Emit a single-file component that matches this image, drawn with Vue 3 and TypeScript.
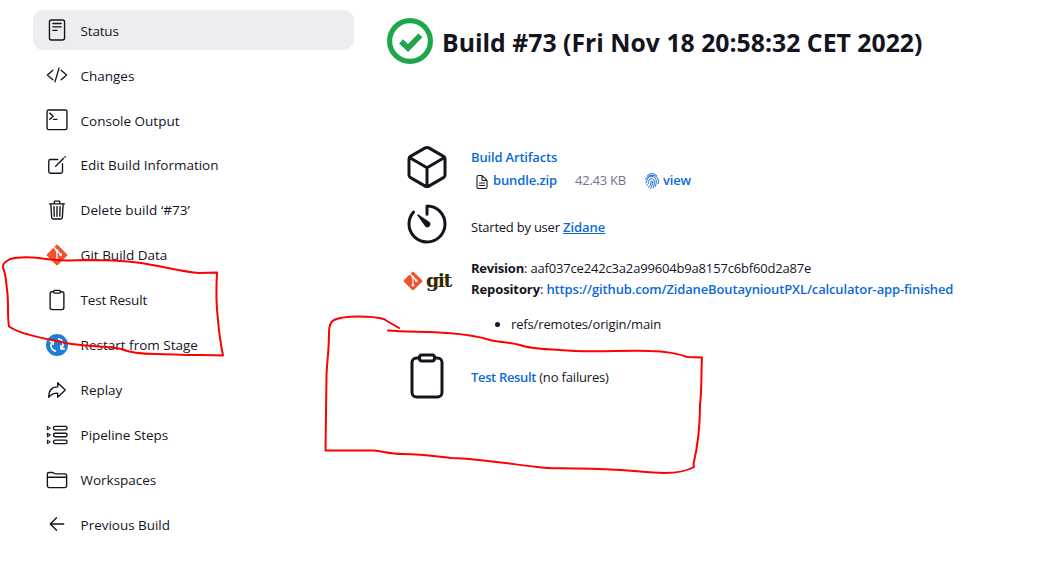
<script setup lang="ts">
interface Task {
  icon: string
  label: string
  track: string
}

const tasks: Task[] = [
  { icon: 'status', label: 'Status', track: 't3' },
  { icon: 'code', label: 'Changes', track: 't1' },
  { icon: 'console', label: 'Console Output', track: 't0' },
  { icon: 'edit', label: 'Edit Build Information', track: 't0' },
  { icon: 'trash', label: 'Delete build ‘#73’', track: 'tw' },
  { icon: 'git', label: 'Git Build Data', track: 't0' },
  { icon: 'clipboard', label: 'Test Result', track: 't3' },
  { icon: 'restart', label: 'Restart from Stage', track: 't0' },
  { icon: 'redo', label: 'Replay', track: 't1' },
  { icon: 'steps', label: 'Pipeline Steps', track: 't1' },
  { icon: 'folder', label: 'Workspaces', track: 't1' },
  { icon: 'back', label: 'Previous Build', track: 't1' },
]
</script>

<template>
  <div class="page">
    <nav class="side">
      <a v-for="(task, i) in tasks" :key="task.label" class="task" :class="{ active: i === 0 }">
        <svg class="ico" viewBox="0 0 512 512">
          <g v-if="task.icon === 'status'">
            <rect x="80" y="24" width="352" height="464" rx="48" />
            <path d="M160 104h192M160 184h192M160 264h96" />
          </g>
          <path v-else-if="task.icon === 'code'" d="M160 368L32 256l128-112M352 368l128-112-128-112M304 96l-96 320" />
          <g v-else-if="task.icon === 'console'">
            <rect x="24" y="24" width="464" height="456" rx="40" />
            <path d="M88 96l80 72-80 72M176 240h80" />
          </g>
          <g v-else-if="task.icon === 'edit'">
            <path d="M384 224v184a40 40 0 01-40 40H104a40 40 0 01-40-40V168a40 40 0 0140-40h167.48" />
            <path class="solid" d="M459.94 53.25a16.06 16.06 0 00-23.22-.56L424.35 65a8 8 0 000 11.31l11.34 11.32a8 8 0 0011.34 0l12.06-12c6.1-6.09 6.67-16.01.85-22.38zM399.34 90L218.82 270.2a9 9 0 00-2.31 3.93L208.16 299a3.91 3.91 0 004.86 4.86l24.85-8.35a9 9 0 003.93-2.31L422 112.66a9 9 0 000-12.66l-9.95-10a9 9 0 00-12.71 0z" />
          </g>
          <path v-else-if="task.icon === 'trash'" d="M112 112l20 320c.95 18.49 14.4 32 32 32h184c17.67 0 30.87-13.51 32-32l20-320M80 112h352M192 112V72a23.93 23.93 0 0124-24h80a23.93 23.93 0 0124 24v40M256 176v224M184 176l8 224M328 176l-8 224" />
          <g v-else-if="task.icon === 'git'">
            <rect class="git-bg" x="78" y="78" width="356" height="356" rx="26" transform="rotate(45 256 256)" />
            <path class="git-line" d="M176 72l78 78v214M254 150l88 92" />
            <g class="git-dot">
              <circle cx="254" cy="158" r="34" /><circle cx="254" cy="364" r="34" /><circle cx="342" cy="250" r="34" />
            </g>
          </g>
          <g v-else-if="task.icon === 'clipboard'">
            <path d="M336 64h32a48 48 0 0148 48v320a48 48 0 01-48 48H144a48 48 0 01-48-48V112a48 48 0 0148-48h32" />
            <rect x="176" y="32" width="160" height="64" rx="26" />
          </g>
          <g v-else-if="task.icon === 'restart'">
            <circle class="blue" cx="256" cy="256" r="256" />
            <path class="white-line" d="M236 400C116 384 82 262 150 172M276 112c120 16 154 138 86 228" />
            <path class="white-line" d="M76 166h92v92M436 346h-92v-92" />
          </g>
          <path v-else-if="task.icon === 'redo'" d="M448 256L272 88v96C103.57 184 64 304.77 64 424c48.61-62.24 91.6-96 208-96v96z" />
          <g v-else-if="task.icon === 'steps'">
            <rect x="176" y="56" width="312" height="80" rx="34" />
            <rect x="176" y="216" width="312" height="80" rx="34" />
            <rect x="176" y="376" width="312" height="80" rx="34" />
            <path class="thin" d="M32 56v80l68-40zM32 216v80l68-40zM32 376v80l68-40z" />
          </g>
          <path v-else-if="task.icon === 'folder'" d="M440 432H72a40 40 0 01-40-40V120a40 40 0 0140-40h75.89a40 40 0 0122.19 6.72l27.84 18.56a40 40 0 0022.19 6.72H440a40 40 0 0140 40v240a40 40 0 01-40 40zM32 192h448" />
          <path v-else d="M244 400L100 256l144-144M120 256h292" />
        </svg>
        <span :class="task.track">{{ task.label }}</span>
      </a>
    </nav>

    <main class="main">
      <header class="head">
        <svg class="ok" viewBox="0 0 46 46">
          <circle cx="23" cy="23" r="20.4" />
          <path d="M14 23.4l7 6.6 12.4-12.6" />
        </svg>
        <h1>Build #73 (Fri Nov 18 20:58:32 CET 2022)</h1>
      </header>

      <section class="row artifacts">
        <svg class="big" viewBox="0 0 512 512">
          <path d="M448 341.37V170.61A32 32 0 00432.11 143l-152-88.46a47.94 47.94 0 00-48.24 0L79.89 143A32 32 0 0064 170.61v170.76A32 32 0 0079.89 369l152 88.46a48 48 0 0048.24 0l152-88.46A32 32 0 00448 341.37zM69 153.99l187 110 187-110M256 463.99v-200" />
        </svg>
        <div class="body">
          <div><a>Build Artifacts</a></div>
          <div class="file">
            <svg class="doc" viewBox="0 0 512 512">
              <path d="M416 221.25V416a48 48 0 01-48 48H144a48 48 0 01-48-48V96a48 48 0 0148-48h98.75a32 32 0 0122.62 9.37l141.26 141.26a32 32 0 019.37 22.62zM256 56v120a32 32 0 0032 32h120M176 288h160M176 368h160" />
            </svg>
            <a class="s-zip">bundle.zip</a>
            <span class="size">42.43 KB</span>
            <svg class="finger" viewBox="0 0 14 16">
              <path d="M2.5 2.6C5-.1 9.300-.1 11.600 2.600M.7 6.200C2.200.9 11.800.9 13.200 6.400c.4 1.600.2 3 0 4.200M.8 10C2.500 8.500 1.400 7 2.800 5.200 5 2.200 10.700 3 11.200 7.400c.2 2.200-.1 4-.7 6M1.700 12.400c2.700-2 1.700-3.800 2.500-5.400 1.200-2.200 4.700-1.700 5 1 .2 2.700-.3 4.900-1 7M3.400 14.400c2.800-2.400 2.400-4.400 2.800-5.900.3-.9 1.100-.8 1.200.2.1 2.900-.6 5-1.700 6.700" />
            </svg>
            <a>view</a>
          </div>
        </div>
      </section>

      <section class="row started">
        <svg class="big" viewBox="0 0 512 512">
          <path d="M112.91 128A191.85 191.85 0 0064 254c-1.18 106.35 85.65 193.8 192 194 106.2.2 192-85.83 192-192 0-104.54-83.55-189.61-187.5-192a4.36 4.36 0 00-4.5 4.37V152" />
          <path class="solid" d="M233.38 278.63l-79-113a8.13 8.13 0 0111.32-11.32l113 79a32.5 32.5 0 01-37.25 53.26 33.21 33.21 0 01-8.07-7.94z" />
        </svg>
        <div class="body"><span class="s-start">Started by user</span> <a class="user">Zidane</a></div>
      </section>

      <section class="row git">
        <div class="git-logo">
          <svg viewBox="0 0 512 512">
            <rect class="git-bg" x="78" y="78" width="356" height="356" rx="26" transform="rotate(45 256 256)" />
            <path class="git-line" d="M176 72l78 78v214M254 150l88 92" />
            <g class="git-dot">
              <circle cx="254" cy="158" r="34" /><circle cx="254" cy="364" r="34" /><circle cx="342" cy="250" r="34" />
            </g>
          </svg>
          <span>git</span>
        </div>
        <div class="body">
          <div><b class="s-rev">Revision</b>: <span>aaf037ce242c3a2a99604b9a8157c6bf60d2a87e</span></div>
          <div><b class="s-repo">Repository</b>: <a class="s-url">https://github.com/ZidaneBoutaynioutPXL/calculator-app-finished</a></div>
          <ul><li>refs/remotes/origin/main</li></ul>
        </div>
      </section>

      <section class="row result">
        <svg class="big" viewBox="0 0 512 512">
          <path d="M336 64h32a48 48 0 0148 48v320a48 48 0 01-48 48H144a48 48 0 01-48-48V112a48 48 0 0148-48h32" />
          <rect x="176" y="32" width="160" height="64" rx="26" />
        </svg>
        <div class="body"><a class="s-test">Test Result</a> <span>(no failures)</span></div>
      </section>
    </main>

    <svg class="marks" viewBox="0 0 1063 583">
      <path d="M3 268C2 264 5 262 10 259C18 257 28 257 39 258C50 260 65 261 85 260C110 260 130 261 147 264C165 267 184 272 199 273L217 272.5C216 289 216 304 218 320C219 334 221 345 223 355.5C200 355 180 355 155 354C142 354 131 353 121 349C110 346 78 347 57 341C40 338 20 334 9 326.5C7 315 9 302 7 290C6 281 6 274 3 268" />
      <path d="M399 328L387 321L384 319C373 316 344 315 334 320C330 322 329 327 329 333C329 350 327 362 326.5 375L325.5 450.5H374C385 452 392 454 402 454C422 454 434 456 451 458C480 459 504 463 537 467C550 469 558 468 575 468.5C610 468 640 472 664 473C678 473 687 471 694 467L693.5 464C698 445 700 425 700 405C702 388 701 374 702 357.5L687 357C680 354 665 351 650 351C620 350 590 353 560 350C545 349 530 349 520 345C510 342 497 342 490 340C475 335 462 334 447 333C430 331.5 405 332 388 330.5" />
    </svg>
  </div>
</template>

<style>
body {
  margin: 0;
  background: #fff;
}
</style>

<style scoped>
.page {
  position: relative;
  display: flex;
  width: 1063px;
  height: 583px;
  overflow: hidden;
  color: #14141f;
  font: 13px/20px 'Open Sans', 'Noto Sans', sans-serif;
  letter-spacing: -0.17px;
}
svg {
  flex: none;
  fill: none;
  stroke: #14141f;
  stroke-width: 32;
  stroke-linecap: round;
  stroke-linejoin: round;
}
.side {
  display: flex;
  flex-direction: column;
  gap: 4.95px;
  width: 321px;
  padding: 10.17px 0 0 33px;
}
.task {
  display: flex;
  align-items: center;
  gap: 12.6px;
  height: 40px;
  padding-left: 13px;
  border-radius: 10px;
  font-size: 13.5px;
}
.task.active {
  background: #edecf1;
}
.task span {
  padding-top: 1px;
}
.ico {
  width: 22px;
  height: 22px;
  overflow: visible;
}
.t0 { letter-spacing: 0; }
.t1 { letter-spacing: -0.03px; }
.t3 { letter-spacing: -0.2px; }
.tw { letter-spacing: 0.07px; }
svg .solid {
  fill: #14141f;
  stroke: none;
}
.thin {
  stroke-width: 24;
}
.git-bg {
  fill: #f4502a;
  stroke: none;
}
.git-line {
  stroke: #fff;
}
.git-dot {
  fill: #fff;
  stroke: none;
}
.blue {
  fill: #1c7fd3;
  stroke: none;
}
.white-line {
  stroke: #fff;
  stroke-width: 36;
  stroke-linecap: butt;
}
.main {
  width: 676px;
  padding: 18px 0 0 33px;
}
.head {
  display: flex;
  align-items: center;
  gap: 9px;
  height: 46px;
}
.ok {
  width: 46px;
  height: 46px;
}
.ok circle {
  stroke: #1ea64b;
  stroke-width: 5.2;
}
.ok path {
  stroke: #1ea64b;
  stroke-width: 5.6;
  stroke-linecap: butt;
  stroke-linejoin: miter;
}
h1 {
  margin: 0;
  padding-top: 2px;
  font-size: 24.8px;
  line-height: 34px;
  font-weight: 700;
  letter-spacing: 0;
  white-space: nowrap;
}
.row {
  display: flex;
  align-items: center;
  gap: 20px;
  padding-left: 16px;
  white-space: nowrap;
}
.artifacts {
  height: 48px;
  margin-top: 79px;
}
.artifacts .body {
  padding-top: 6px;
}
.started {
  height: 48px;
  margin-top: 9px;
}
.started .body {
  padding-top: 5px;
}
.git {
  align-items: flex-start;
  height: 78px;
  margin-top: 10px;
}
.git .body {
  line-height: 21px;
}
.result {
  height: 48px;
  margin-top: 16px;
}
.result .body {
  padding-top: 2px;
}
.big {
  width: 48px;
  height: 48px;
}
a {
  color: #0b6ad8;
  font-weight: 600;
}
.task {
  color: #14141f;
  font-weight: 400;
}
.file {
  display: flex;
  align-items: center;
  height: 26px;
}
.doc {
  width: 16px;
  height: 16px;
  margin: 3px 3px 0;
  stroke-width: 34;
}
.size {
  width: 51px;
  margin: 0 19px 0 18px;
  color: #73738c;
  letter-spacing: -0.24px;
}
.finger {
  width: 14px;
  height: 16px;
  margin: 1px 4px 0 0;
  stroke: #0b6ad8;
  stroke-width: 1;
}
.user {
  letter-spacing: -0.03px;
  text-decoration: underline;
}
.git-logo {
  display: flex;
  align-items: center;
  width: 48px;
  height: 46px;
}
.git-logo svg {
  width: 20px;
  height: 20px;
}
.git-logo span {
  margin: -2px 0 0 3px;
  color: #362701;
  font: 700 19px/26px 'DejaVu Serif', serif;
  letter-spacing: -1.5px;
}
ul {
  margin: 14px 0 0;
  padding-left: 40px;
}
li {
  letter-spacing: -0.14px;
}
.s-zip { letter-spacing: -0.13px; }
.s-start { letter-spacing: -0.23px; }
.s-rev { letter-spacing: -0.21px; }
.s-repo { letter-spacing: -0.1px; }
.s-url { letter-spacing: -0.14px; }
.s-test { letter-spacing: -0.35px; }
.marks {
  position: absolute;
  inset: 0;
  width: 1063px;
  height: 583px;
  pointer-events: none;
}
.marks path {
  stroke: #f00;
  stroke-width: 2;
}
</style>
